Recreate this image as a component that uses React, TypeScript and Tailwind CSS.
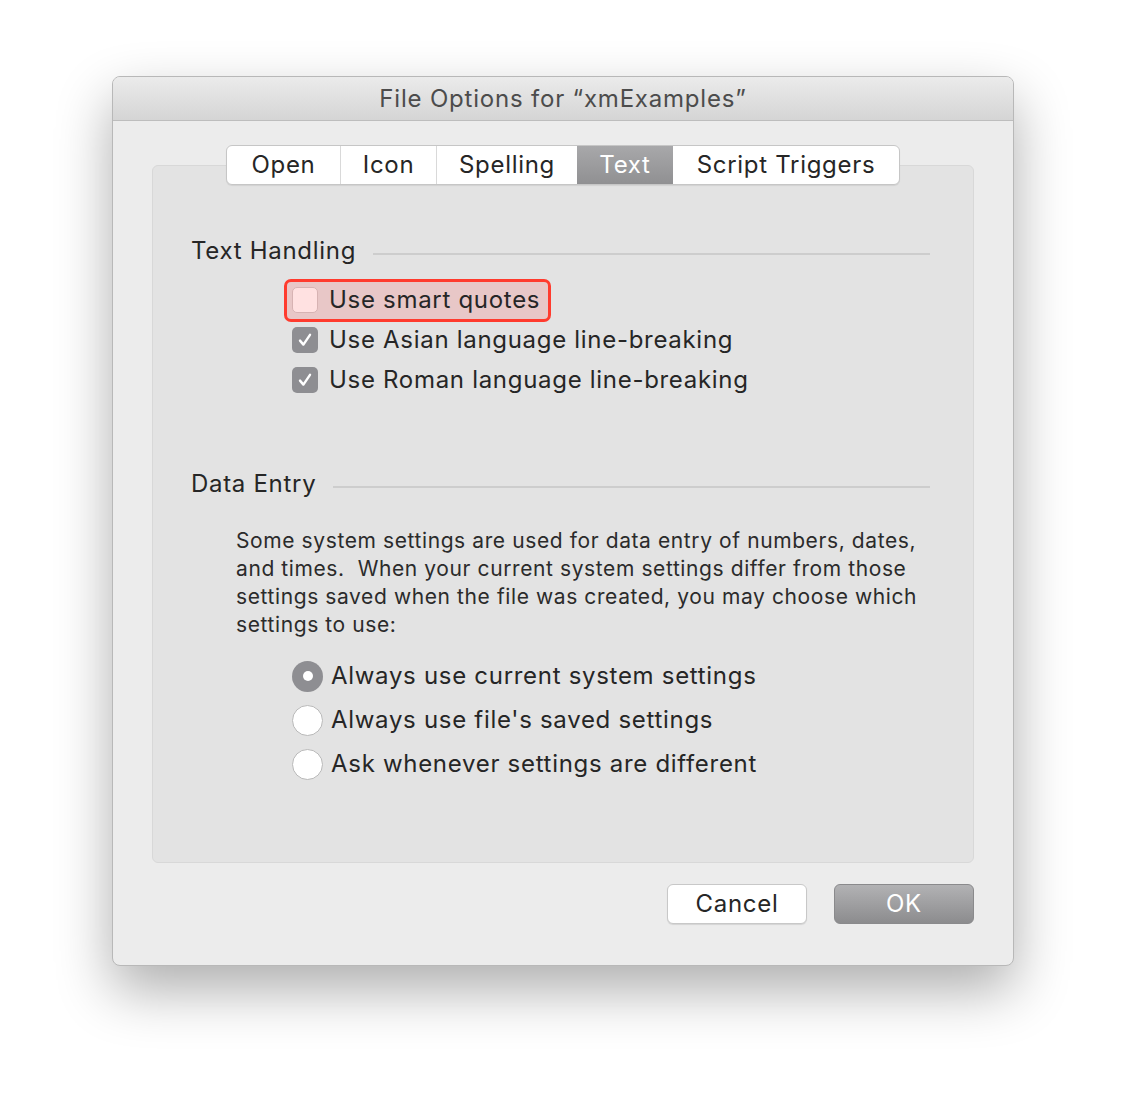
const font = { fontFamily: 'Inter, "Noto Sans", sans-serif' }

const tabs = [
  { label: 'Open', w: 'w-[113px]' },
  { label: 'Icon', w: 'w-[96px]' },
  { label: 'Spelling', w: 'w-[141px]' },
  { label: 'Text', w: 'w-[96px]', active: true },
  { label: 'Script Triggers', w: 'w-[226px]' },
]

const Check = ({ checked }: { checked: boolean }) =>
  checked ? (
    <span className="w-[26px] h-[26px] rounded-[5px] bg-[#8e8e92] flex items-center justify-center shrink-0">
      <svg width="18" height="18" viewBox="0 0 18 18">
        <path d="M4 9.6 L7.4 13.6 L14 3.8" fill="none" stroke="white" strokeWidth="2.4" strokeLinecap="round" strokeLinejoin="round" />
      </svg>
    </span>
  ) : (
    <span className="w-[26px] h-[26px] rounded-[5px] bg-[#ffe1e1] border border-[#d7b3b3] shrink-0" />
  )

const Radio = ({ on }: { on: boolean }) =>
  on ? (
    <span className="w-[31px] h-[31px] rounded-full bg-[#8e8e92] flex items-center justify-center shrink-0">
      <span className="w-[10px] h-[10px] rounded-full bg-white" />
    </span>
  ) : (
    <span className="w-[31px] h-[31px] rounded-full bg-white border border-[#b9b9b9] shrink-0" />
  )

const Header = ({ title }: { title: string }) => (
  <div className="flex items-center pl-[38px] pr-[43px] h-[28px]">
    <span className="text-[24px] leading-[28px] tracking-[0.7px] text-[#262626]">{title}</span>
    <span className="flex-1 h-[2px] bg-[#cdcdcd] ml-[17px] mt-[6px]" />
  </div>
)

export default function App() {
  return (
    <div className="w-[1126px] h-[1114px] bg-white pt-[76px] pl-[112px]" style={font}>
      <div className="w-[902px] h-[890px] rounded-[8px] bg-[#ececec] border border-[#b8b8b8] shadow-[0_24px_56px_rgba(0,0,0,0.32)] flex flex-col overflow-hidden">
        {/* title bar */}
        <div className="h-[44px] shrink-0 bg-gradient-to-b from-[#ebebeb] to-[#d5d5d5] border-b border-[#bdbdbd] flex items-center justify-center">
          <span className="text-[24px] tracking-[0.8px] text-[#4c4c4c]">File Options for “xmExamples”</span>
        </div>

        <div className="flex flex-col px-[39px] pt-[24px]">
          {/* tabs */}
          <div className="flex justify-center relative z-10">
            <div className="flex h-[40px] rounded-[6px] border border-[#c6c6c6] bg-white overflow-hidden shadow-[0_1px_1px_rgba(0,0,0,0.08)]">
              {tabs.map((t, i) => (
                <div
                  key={t.label}
                  className={`${t.w} flex items-center justify-center text-[24px] tracking-[0.7px] ${
                    t.active
                      ? 'bg-gradient-to-b from-[#a8a8aa] to-[#909092] text-white'
                      : 'text-[#262626]'
                  } ${i > 0 && !t.active && !tabs[i - 1].active ? 'border-l border-[#d9d9d9]' : ''}`}
                >
                  {t.label}
                </div>
              ))}
            </div>
          </div>

          {/* panel */}
          <div className="-mt-[20px] h-[698px] rounded-[6px] bg-[#e3e3e3] border border-[#d8d8d8] pt-[71px]">
            <Header title="Text Handling" />
            <div className="flex flex-col pl-[139px] mt-[15px] text-[24px] tracking-[0.7px] text-[#262626]">
              <div className="h-[40px] flex items-center">
                <div className="-ml-[8px] h-[43px] pl-[5px] pr-[8px] flex items-center gap-[11px] rounded-[7px] border-[3px] border-[#ff3b2e] bg-[#e8c7c7]">
                  <Check checked={false} />
                  <span>Use smart quotes</span>
                </div>
              </div>
              <div className="h-[40px] flex items-center gap-[11px]">
                <Check checked />
                <span>Use Asian language line-breaking</span>
              </div>
              <div className="h-[40px] flex items-center gap-[11px]">
                <Check checked />
                <span>Use Roman language line-breaking</span>
              </div>
            </div>

            <div className="mt-[70px]">
              <Header title="Data Entry" />
            </div>

            <p className="pl-[83px] mt-[29px] text-[21px] leading-[28px] tracking-[0.6px] text-[#2b2b2b] whitespace-nowrap">
              Some system settings are used for data entry of numbers, dates,
              <br />
              and times.&nbsp; When your current system settings differ from those
              <br />
              settings saved when the file was created, you may choose which
              <br />
              settings to use:
            </p>

            <div className="flex flex-col pl-[139px] mt-[15px] text-[24px] tracking-[0.7px] text-[#262626]">
              {[
                ['Always use current system settings', true],
                ["Always use file's saved settings", false],
                ['Ask whenever settings are different', false],
              ].map(([label, on]) => (
                <div key={label as string} className="h-[44px] flex items-center gap-[8px]">
                  <Radio on={on as boolean} />
                  <span>{label}</span>
                </div>
              ))}
            </div>
          </div>

          {/* buttons */}
          <div className="flex justify-end gap-[27px] mt-[21px]">
            <button className="w-[140px] h-[40px] rounded-[6px] bg-white border border-[#c8c8c8] shadow-[0_1px_1px_rgba(0,0,0,0.1)] text-[24px] tracking-[0.7px] text-[#262626]">
              Cancel
            </button>
            <button className="w-[140px] h-[40px] rounded-[6px] bg-gradient-to-b from-[#b2b2b4] to-[#8c8c8e] border border-[#8a8a8c] text-[24px] tracking-[0.7px] text-white">
              OK
            </button>
          </div>
        </div>
      </div>
    </div>
  )
}
